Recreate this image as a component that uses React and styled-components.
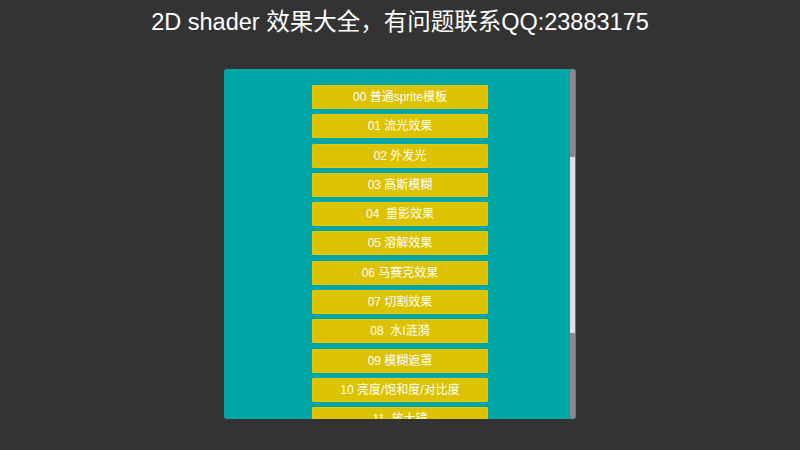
import React from 'react';
import styled, { createGlobalStyle } from 'styled-components';

const GlobalStyle = createGlobalStyle`
    html, body {
        margin: 0;
        padding: 0;
        background: #333333;
        font-family: "Liberation Sans", "Noto Sans CJK SC", sans-serif;
    }
`

const Page = styled.div`
    width: 800px;
    height: 450px;
    display: flex;
    flex-direction: column;
    align-items: center;
    overflow: hidden;
`

const Title = styled.h1`
    margin: 0;
    padding-top: 8px;
    height: 69px;
    box-sizing: border-box;
    font-size: 23.5px;
    font-weight: normal;
    line-height: 28px;
    color: #ffffff;
`

const Panel = styled.div`
    position: relative;
    width: 352px;
    height: 350px;
    background: #00a6a6;
    border-radius: 3px;
    overflow: hidden;
`

const List = styled.div`
    display: flex;
    flex-direction: column;
    align-items: center;
    gap: 5.3px;
    padding-top: 16px;
`

const ShaderButton = styled.div`
    width: 176px;
    height: 24px;
    box-sizing: border-box;
    background: #dcc200;
    border: 1px solid #e3c90c;
    border-radius: 1px;
    color: #ffffff;
    font-size: 12px;
    line-height: 22px;
    text-align: center;
    white-space: pre;
`

const ScrollTrack = styled.div`
    position: absolute;
    top: 0;
    right: 1px;
    width: 5px;
    height: 100%;
    background: #8a8a8a;
    border-radius: 2px;
`

const ScrollThumb = styled.div`
    position: absolute;
    left: 0;
    width: 100%;
    background: #dedede;
`

const shaders = [
    '00 普通sprite模板',
    '01 流光效果',
    '02 外发光',
    '03 高斯模糊',
    '04  重影效果',
    '05 溶解效果',
    '06 马赛克效果',
    '07 切割效果',
    '08  水I涟漪',
    '09 模糊遮罩',
    '10 亮度/饱和度/对比度',
    '11  放大镜',
]

function App(){
    return(
        <>
        <GlobalStyle/>
        <Page>
            <Title>2D shader 效果大全，有问题联系QQ:23883175</Title>
            <Panel>
                <List>
                    {shaders.map((name)=>(
                        <ShaderButton key={name}>{name}</ShaderButton>
                    ))}
                </List>
                <ScrollTrack>
                    <ScrollThumb style={{top: 88, height: 176}}/>
                </ScrollTrack>
            </Panel>
        </Page>
        </>
    )
}

export default App;
